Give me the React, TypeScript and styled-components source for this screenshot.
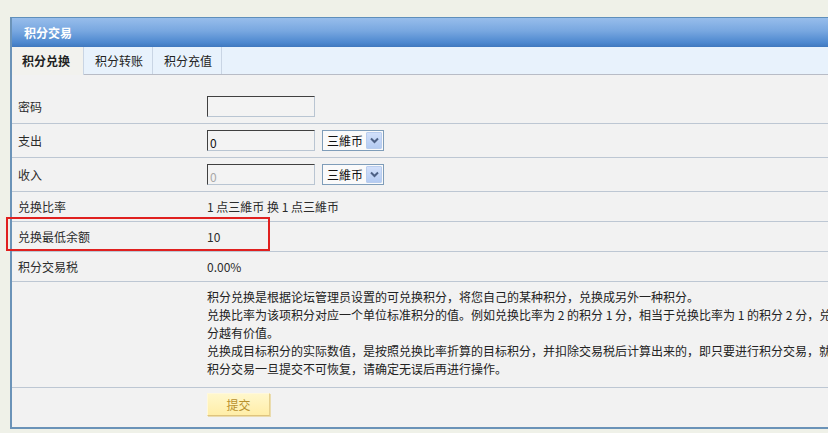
import React from "react";
import styled, { createGlobalStyle } from "styled-components";

const GlobalStyle = createGlobalStyle`
  html, body {
    margin: 0;
    padding: 0;
    background: #eff1e8;
    overflow: hidden;
    font-family: "Noto Sans CJK SC", "Liberation Sans", sans-serif;
    font-size: 12px;
    color: #2b2b2b;
  }
  * { box-sizing: border-box; }
`;

const Page = styled.div`
  padding: 17px 0 0 10px;
  width: 1100px;
`;

const Panel = styled.div`
  width: 1000px;
  border-top: 1px solid #5f8fbb;
  border-left: 2px solid #6b93b8;
  border-bottom: 2px solid #6b93b8;
`;

const Header = styled.div`
  height: 29px;
  line-height: 29px;
  padding-left: 12px;
  color: #ffffff;
  font-weight: bold;
  background: linear-gradient(to bottom, #97bdeb 0%, #78a7e0 45%, #4d88cf 85%, #3f78be 100%);
`;

const TabBar = styled.div`
  display: flex;
  height: 28px;
  background: #e8f2fc;
  border-bottom: 1px solid #b8bcc6;
`;

const Tab = styled.div<{ $active?: boolean; $w: number }>`
  width: ${(p) => p.$w}px;
  height: ${(p) => (p.$active ? 28 : 27)}px;
  line-height: 27px;
  padding-left: ${(p) => (p.$active ? 10 : 11)}px;
  border-right: 1px solid #c9d5e4;
  background: ${(p) => (p.$active ? "#f2f2ee" : "transparent")};
  font-weight: ${(p) => (p.$active ? "bold" : "normal")};
  color: #222;
`;

const Body = styled.div`
  background: #f2f2f2;
  padding-top: 14px;
`;

const Row = styled.div<{ $h: number; $last?: boolean; $top?: boolean }>`
  position: relative;
  display: grid;
  grid-template-columns: 195px 1fr;
  align-items: ${(p) => (p.$top ? "start" : "center")};
  height: ${(p) => p.$h}px;
  border-bottom: ${(p) => (p.$last ? "none" : "1px solid #bdc7d3")};
`;

const Label = styled.div`
  padding-left: 6px;
`;

const Value = styled.div`
  display: flex;
  align-items: center;
  white-space: nowrap;
`;

const TextInput = styled.div<{ $disabled?: boolean }>`
  width: 108px;
  height: 21px;
  border: 1px solid;
  border-color: #404040 #b9c5d2 #b9c5d2 #404040;
  background: #f3f3f3;
  padding: 5px 0 0 2px;
  line-height: 14px;
  color: ${(p) => (p.$disabled ? "#a8a8a8" : "#111")};
`;

const Select = styled.div`
  display: flex;
  align-items: center;
  justify-content: space-between;
  margin-left: 7px;
  width: 62px;
  height: 21px;
  border: 1px solid #7f9db9;
  background: #fafafa;
  padding: 0 1px 0 4px;
  color: #111;
`;

const Arrow = styled.div`
  display: flex;
  align-items: center;
  justify-content: center;
  width: 16px;
  height: 17px;
  border: 1px solid #b9cdee;
  background: linear-gradient(to bottom, #d2e0fa, #b4cbf2);
  border-radius: 1px;
`;

const Desc = styled.div`
  padding-top: 6px;
  line-height: 18px;
  white-space: nowrap;
  color: #222;
`;

const ButtonCell = styled.div`
  padding-top: 5px;
`;

const SubmitButton = styled.div`
  width: 63px;
  height: 23px;
  line-height: 21px;
  text-align: center;
  color: #b8902c;
  background: linear-gradient(to bottom, #fff7cc, #ffeea8);
  border: 1px solid;
  border-color: #fff8dc #e6d08e #dfc47e #fff8dc;
  box-shadow: 1px 1px 0 #eadcae;
`;

const Highlight = styled.div`
  position: absolute;
  left: -6px;
  top: -5px;
  width: 264px;
  height: 34px;
  border: 2px solid #e0201f;
  pointer-events: none;
`;

const Chevron = () => (
  <svg width="9" height="7" viewBox="0 0 9 7">
    <path d="M1 1.5 L4.5 5 L8 1.5" fill="none" stroke="#4d6185" strokeWidth="2" />
  </svg>
);

const CurrencySelect = () => (
  <Select>
    <span>三維币</span>
    <Arrow>
      <Chevron />
    </Arrow>
  </Select>
);

export default function App() {
  return (
    <>
      <GlobalStyle />
      <Page>
        <Panel>
          <Header>积分交易</Header>
          <TabBar>
            <Tab $active $w={72}>积分兑换</Tab>
            <Tab $w={69}>积分转账</Tab>
            <Tab $w={69}>积分充值</Tab>
          </TabBar>
          <Body>
            <Row $h={35}>
              <Label>密码</Label>
              <Value>
                <TextInput />
              </Value>
            </Row>
            <Row $h={34}>
              <Label>支出</Label>
              <Value>
                <TextInput>0</TextInput>
                <CurrencySelect />
              </Value>
            </Row>
            <Row $h={34}>
              <Label>收入</Label>
              <Value>
                <TextInput $disabled>0</TextInput>
                <CurrencySelect />
              </Value>
            </Row>
            <Row $h={30}>
              <Label>兑换比率</Label>
              <Value>1 点三維币 换 1 点三維币</Value>
            </Row>
            <Row $h={30}>
              <Highlight />
              <Label>兑换最低余额</Label>
              <Value>10</Value>
            </Row>
            <Row $h={30}>
              <Label>积分交易税</Label>
              <Value>0.00%</Value>
            </Row>
            <Row $h={106} $top>
              <Label />
              <Desc>
                积分兑换是根据论坛管理员设置的可兑换积分，将您自己的某种积分，兑换成另外一种积分。
                <br />
                兑换比率为该项积分对应一个单位标准积分的值。例如兑换比率为 2 的积分 1 分，相当于兑换比率为 1 的积分 2 分，兑换比率越高的积
                <br />
                分越有价值。
                <br />
                兑换成目标积分的实际数值，是按照兑换比率折算的目标积分，并扣除交易税后计算出来的，即只要进行积分交易，就要支付交易税。
                <br />
                积分交易一旦提交不可恢复，请确定无误后再进行操作。
              </Desc>
            </Row>
            <Row $h={39} $last $top>
              <Label />
              <ButtonCell>
                <SubmitButton>提交</SubmitButton>
              </ButtonCell>
            </Row>
          </Body>
        </Panel>
      </Page>
    </>
  );
}
